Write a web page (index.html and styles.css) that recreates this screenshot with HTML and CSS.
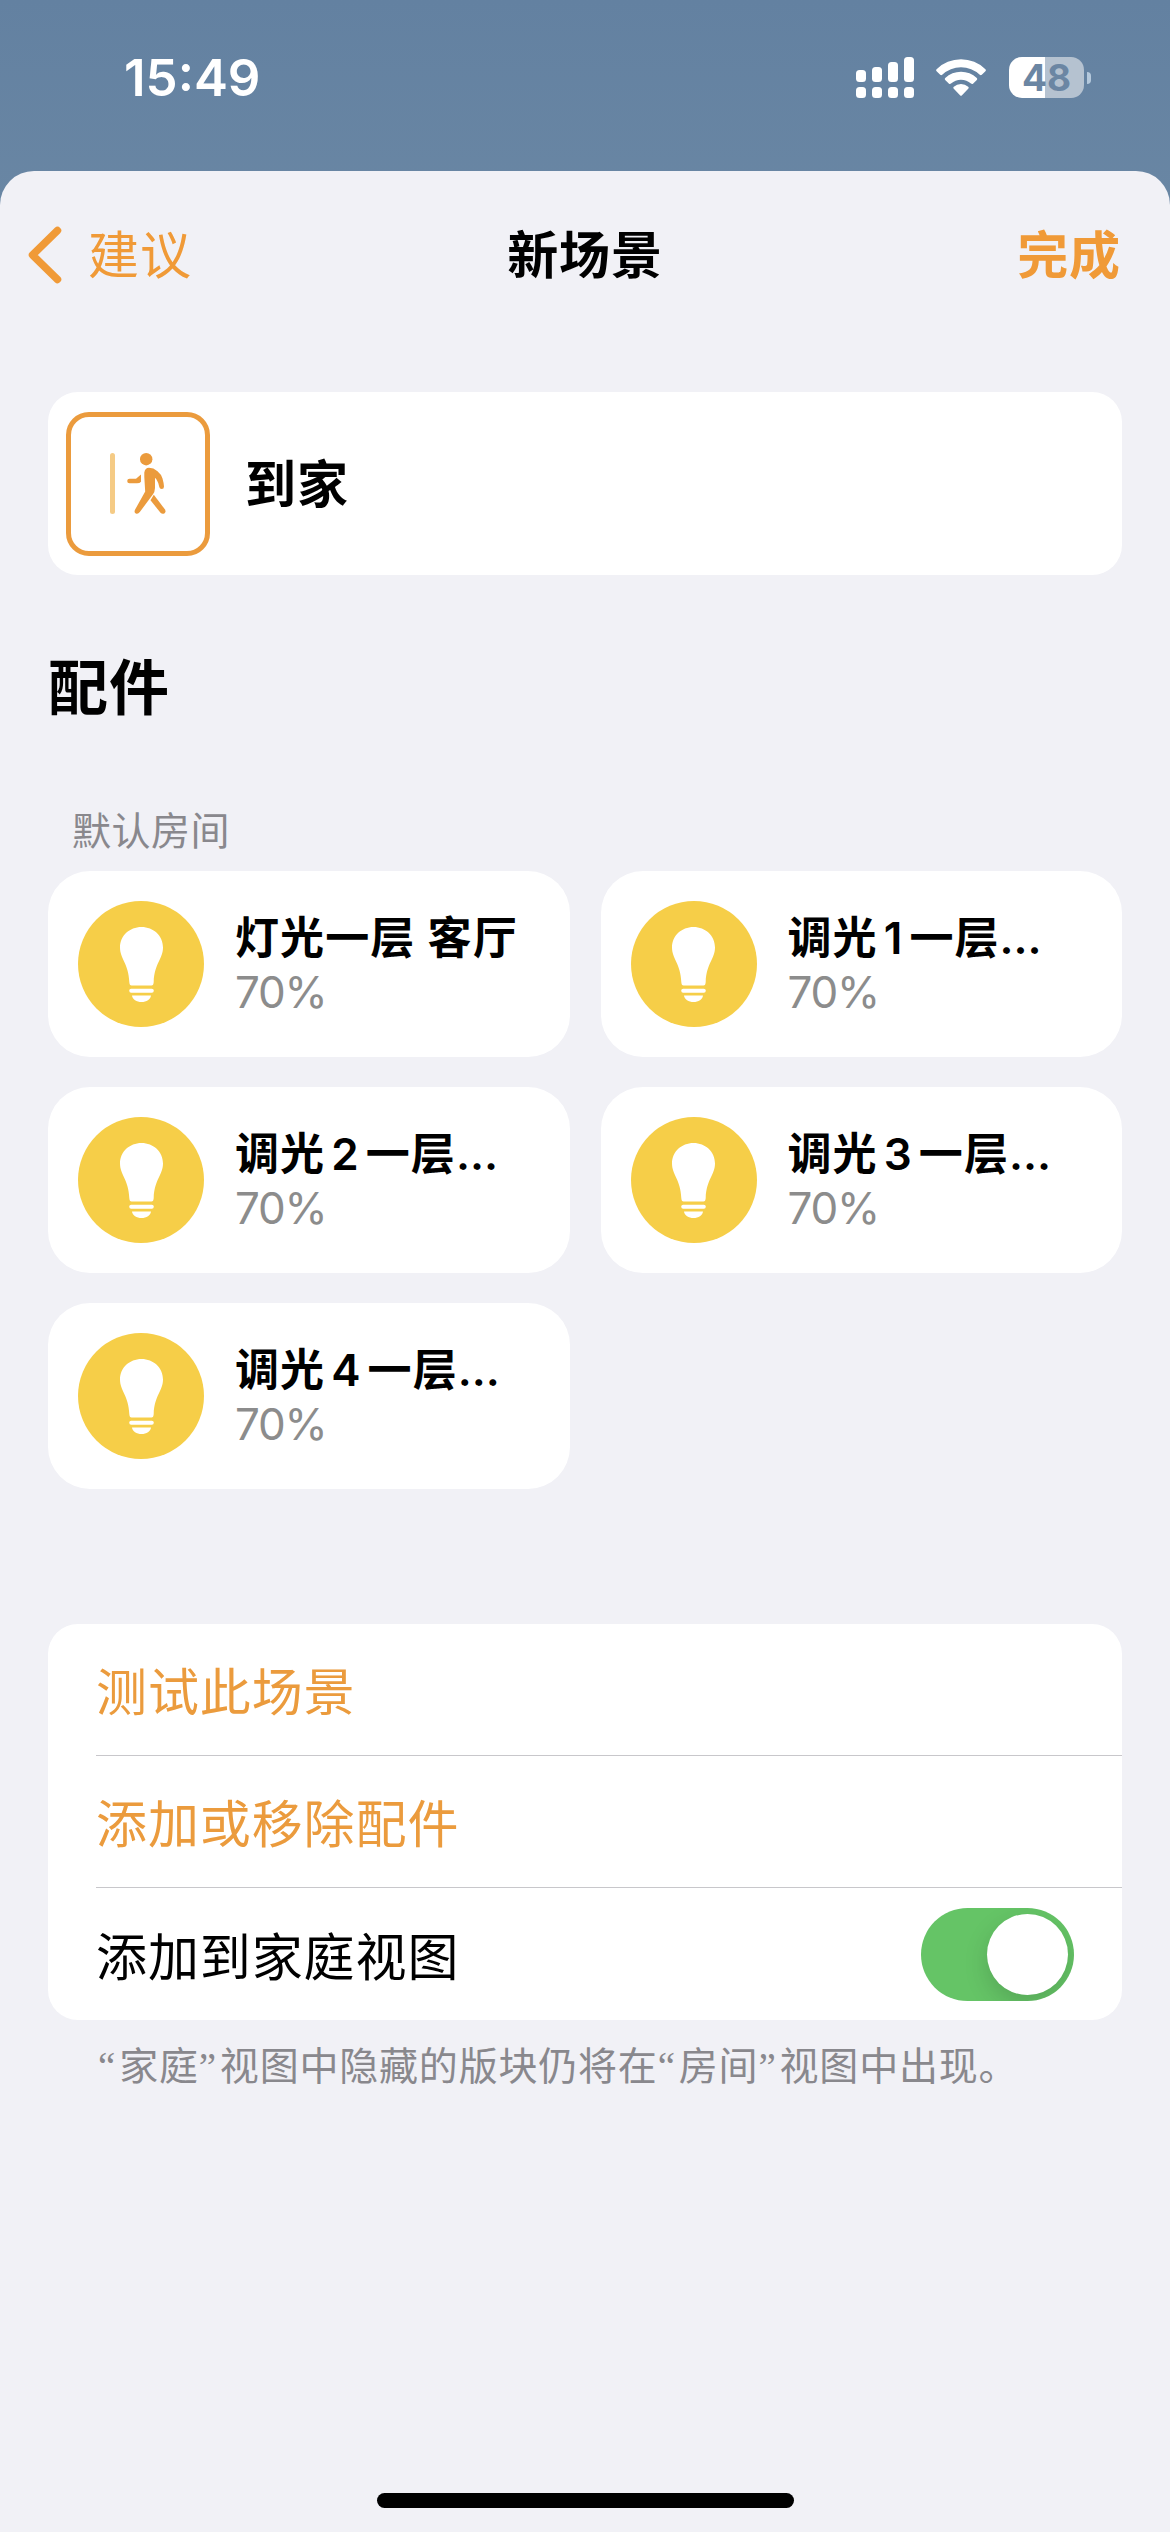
FILE: index.html
```html
<!DOCTYPE html>
<html lang="zh-CN">
<head>
    <meta charset="UTF-8">
    <meta name="viewport" content="width=device-width, initial-scale=1.0">
    <title>新场景</title>
    <link rel="stylesheet" href="styles.css">
</head>
<body>
    <!-- shared bulb icon -->
    <svg class="defs" width="0" height="0">
        <symbol id="bulb" viewBox="0 0 43 75">
            <path d="M21.500 0C9.500 0 0 8.800 0 20.500C0 32 8.500 36 9.300 55Q9.500 58.500 11.500 58.500H31.500Q33.500 58.500 33.700 55C34.500 36 43 32 43 20.500C43 8.800 33.500 0 21.500 0Z"/>
            <rect x="9.200" y="61.700" width="24.600" height="4" rx="2"/>
            <path d="M12 68.500H31C30.500 72.500 26.500 75 21.500 75S12.500 72.500 12 68.500Z"/>
        </symbol>
    </svg>

    <div class="status-bar">
        <span class="time">15:49</span>
        <div class="status-icons">
            <svg class="signal" width="58" height="41" viewBox="0 0 58 41">
                <rect x="0" y="13" width="10" height="12" rx="3.500"/>
                <rect x="16" y="10" width="10" height="15" rx="3.500"/>
                <rect x="32" y="5" width="10" height="20" rx="3.500"/>
                <rect x="48" y="0" width="10" height="25" rx="3.500"/>
                <rect x="0" y="30" width="10" height="11" rx="3.500"/>
                <rect x="16" y="30" width="10" height="11" rx="3.500"/>
                <rect x="32" y="30" width="10" height="11" rx="3.500"/>
                <rect x="48" y="30" width="10" height="11" rx="3.500"/>
            </svg>
            <svg class="wifi" width="50" height="37" viewBox="0 0 50 37">
                <path d="M0.600 10.200A35 35 0 0 1 49.400 10.200Q50.400 11.300 49.400 12.300L45.800 15.800Q44.800 16.600 43.800 15.700A27.500 27.500 0 0 0 6.200 15.700Q5.200 16.600 4.200 15.800L0.600 12.300Q-0.400 11.300 0.600 10.200Z"/>
                <path d="M9.200 19A23 23 0 0 1 40.800 19Q41.800 20 40.800 21L37 24.700Q36 25.500 35 24.600A15 15 0 0 0 15 24.600Q14 25.500 13 24.700L9.200 21Q8.200 20 9.200 19Z"/>
                <path d="M17.800 27.800A11 11 0 0 1 32.200 27.800Q33.200 28.800 32.200 29.800L26 36.200Q25 37.200 24 36.200L17.800 29.800Q16.800 28.800 17.800 27.800Z"/>
            </svg>
            <div class="battery">
                <div class="battery-body">48</div>
                <div class="battery-cap"></div>
            </div>
        </div>
    </div>

    <div class="sheet">
        <div class="nav">
            <div class="back">
                <svg width="34" height="58" viewBox="0 0 34 58">
                    <path d="M29.500 4.500L4.500 29L29.500 53.500" fill="none" stroke="#f09a37" stroke-width="7.500" stroke-linecap="round" stroke-linejoin="round"/>
                </svg>
                <span>建议</span>
            </div>
            <div class="nav-title">新场景</div>
            <div class="done">完成</div>
        </div>

        <div class="scene-card">
            <div class="scene-icon">
                <svg width="56" height="62" viewBox="0 0 56 62">
                    <rect x="0" y="0" width="5" height="61" rx="2.500" fill="#f5cb85"/>
                    <g fill="#eb9b3d">
                        <circle cx="36.200" cy="6.200" r="6.200"/>
                        <path d="M34.300 24V19.500Q35 14.800 39 14.800Q43.500 14.800 47.500 18.200Q51.500 21.500 52.500 25.500Q53.800 30 54 33.500Q54 36 51.800 36.100Q49.600 36.100 49.300 34Q48.500 29.500 46.500 26.500L45 24.800L45 35Q44.800 39 43 41.300L29.800 59Q28 61.500 25.800 60.500Q23.800 59.300 25 56.800L35.200 38.500Z"/>
                        <path d="M31 21.500V28.700Q29.800 30.200 27 30.200H19.500Q17.200 30 17.200 27.900Q17.300 25.900 19.500 25.800H26Z"/>
                        <path d="M43.800 41.800L55 56.500Q56.200 59 54.300 60.500Q52.300 61.500 50.500 59.800L40.500 47.200Z"/>
                    </g>
                </svg>
            </div>
            <span class="scene-name">到家</span>
        </div>

        <h2 class="section-title">配件</h2>
        <div class="room-name">默认房间</div>

        <div class="tiles">
            <div class="tile">
                <div class="bulb"><svg width="43" height="75"><use href="#bulb"/></svg></div>
                <div class="tile-text">
                    <div class="tile-name">灯光一层 客厅</div>
                    <div class="tile-value">70%</div>
                </div>
            </div>
            <div class="tile">
                <div class="bulb"><svg width="43" height="75"><use href="#bulb"/></svg></div>
                <div class="tile-text">
                    <div class="tile-name">调光<span class="num">1</span>一层…</div>
                    <div class="tile-value">70%</div>
                </div>
            </div>
            <div class="tile">
                <div class="bulb"><svg width="43" height="75"><use href="#bulb"/></svg></div>
                <div class="tile-text">
                    <div class="tile-name">调光<span class="num">2</span>一层…</div>
                    <div class="tile-value">70%</div>
                </div>
            </div>
            <div class="tile">
                <div class="bulb"><svg width="43" height="75"><use href="#bulb"/></svg></div>
                <div class="tile-text">
                    <div class="tile-name">调光<span class="num">3</span>一层…</div>
                    <div class="tile-value">70%</div>
                </div>
            </div>
            <div class="tile">
                <div class="bulb"><svg width="43" height="75"><use href="#bulb"/></svg></div>
                <div class="tile-text">
                    <div class="tile-name">调光<span class="num">4</span>一层…</div>
                    <div class="tile-value">70%</div>
                </div>
            </div>
        </div>

        <div class="list">
            <div class="row action">测试此场景</div>
            <div class="row action">添加或移除配件</div>
            <div class="row">
                <span>添加到家庭视图</span>
                <div class="toggle"><div class="knob"></div></div>
            </div>
        </div>
        <p class="note"><span class="quote">“</span>家庭<span class="quote">”</span>视图中隐藏的版块仍将在<span class="quote">“</span>房间<span class="quote">”</span>视图中出现。</p>

        <div class="home-bar"></div>
    </div>
</body>
</html>
```
FILE: styles.css
```css
* {
    box-sizing: border-box;
}

body {
    margin: 0;
    width: 1170px;
    height: 2532px;
    display: flex;
    flex-direction: column;
    overflow: hidden;
    font-family: Inter, "Noto Sans CJK SC", sans-serif;
    font-size: 51px;
    letter-spacing: 0.900px;
    color: #000;
    background: linear-gradient(#6381a1 0, #6a87a4 240px);
}

.defs {
    position: absolute;
}

/* status bar */
.status-bar {
    height: 171px;
    flex: none;
    display: flex;
    justify-content: space-between;
    padding: 57px 79px 0 124px;
    color: #fff;
}

.time {
    height: 42px;
    line-height: 42px;
    font-size: 51px;
    font-weight: 600;
    letter-spacing: 0;
}

.status-icons {
    display: flex;
    height: 41px;
    fill: #fff;
}

.wifi {
    margin: 2px 23px 0 22px;
}

.battery {
    display: flex;
    align-items: center;
    gap: 3px;
}

.battery-body {
    width: 75px;
    height: 41px;
    border-radius: 13px;
    background: linear-gradient(90deg, #fff 36px, #b5c2d0 36px);
    color: #6b86a3;
    font-size: 37px;
    font-weight: 700;
    line-height: 41px;
    letter-spacing: 0;
    text-align: center;
}

.battery-cap {
    width: 4px;
    height: 12px;
    border-radius: 0 4px 4px 0;
    background: #b5c9dc;
}

/* sheet */
.sheet {
    flex: 1;
    display: flex;
    flex-direction: column;
    padding: 0 48px;
    border-radius: 34px 34px 0 0;
    background: #f1f1f6;
}

.nav {
    display: grid;
    grid-template-columns: 1fr auto 1fr;
    align-items: center;
    height: 168px;
    margin: 0 -20px 53px;
    line-height: 72px;
}

.back {
    display: flex;
    align-items: center;
    gap: 26px;
    color: #f09a37;
}

.back span,
.nav-title,
.done {
    padding-top: 2px;
}

.nav-title {
    font-weight: 600;
}

.done {
    padding-right: 21px;
    text-align: right;
    font-weight: 600;
    color: #f09a37;
}

.scene-card {
    display: flex;
    align-items: center;
    height: 183px;
    padding-left: 18px;
    border-radius: 30px;
    background: #fff;
}

.scene-icon {
    width: 144px;
    height: 144px;
    display: flex;
    align-items: center;
    justify-content: center;
    border: 5px solid #eb9b3d;
    border-radius: 23px;
}

.scene-name {
    margin-left: 35px;
    padding-bottom: 5px;
    font-weight: 600;
}

.section-title {
    margin: 69px 0 0;
    line-height: 88px;
    font-size: 60px;
    font-weight: 700;
}

.room-name {
    margin: 70px 0 11px 24px;
    line-height: 58px;
    font-size: 39px;
    letter-spacing: 0.500px;
    color: #89888d;
}

/* accessories */
.tiles {
    display: grid;
    grid-template-columns: 1fr 1fr;
    gap: 30px 31px;
}

.tile {
    height: 186px;
    display: flex;
    align-items: center;
    padding-left: 30px;
    border-radius: 42px;
    background: #fff;
}

.bulb {
    width: 126px;
    height: 126px;
    display: flex;
    align-items: center;
    justify-content: center;
    border-radius: 50%;
    background: #f6ce48;
    fill: #fff;
}

.tile-text {
    margin-left: 31px;
    padding-top: 2px;
    font-size: 44px;
    line-height: 54px;
    white-space: nowrap;
}

.tile-name {
    font-weight: 600;
    letter-spacing: 1.100px;
}

.num {
    margin: 0 6px;
}

.tile-value {
    letter-spacing: -1.200px;
    color: #8c8c8c;
}

/* options list */
.list {
    margin-top: 135px;
    padding-left: 48px;
    border-radius: 30px;
    background: #fff;
}

.row {
    display: flex;
    align-items: center;
    justify-content: space-between;
    height: 132px;
    padding: 0 48px 2px 0;
    border-bottom: 1px solid #c8c7cb;
}

.row:last-child {
    padding-bottom: 0;
    border-bottom: none;
}

.action {
    color: #eb9b3d;
}

.toggle {
    width: 153px;
    height: 93px;
    display: flex;
    justify-content: flex-end;
    padding: 6px;
    border-radius: 47px;
    background: #65c466;
    overflow: hidden;
}

.knob {
    width: 81px;
    height: 81px;
    border-radius: 50%;
    background: #fff;
    box-shadow: 0 9px 24px rgba(0, 0, 0, 0.15);
}

.note {
    margin: 17px 0 0 50px;
    line-height: 58px;
    font-size: 39px;
    letter-spacing: 0.800px;
    color: #89888d;
    white-space: nowrap;
}

.quote {
    font-family: "Liberation Serif", serif;
    margin-right: 3px;
}

.home-bar {
    width: 417px;
    height: 15px;
    margin: auto auto 24px;
    border-radius: 8px;
    background: #000;
}
```
